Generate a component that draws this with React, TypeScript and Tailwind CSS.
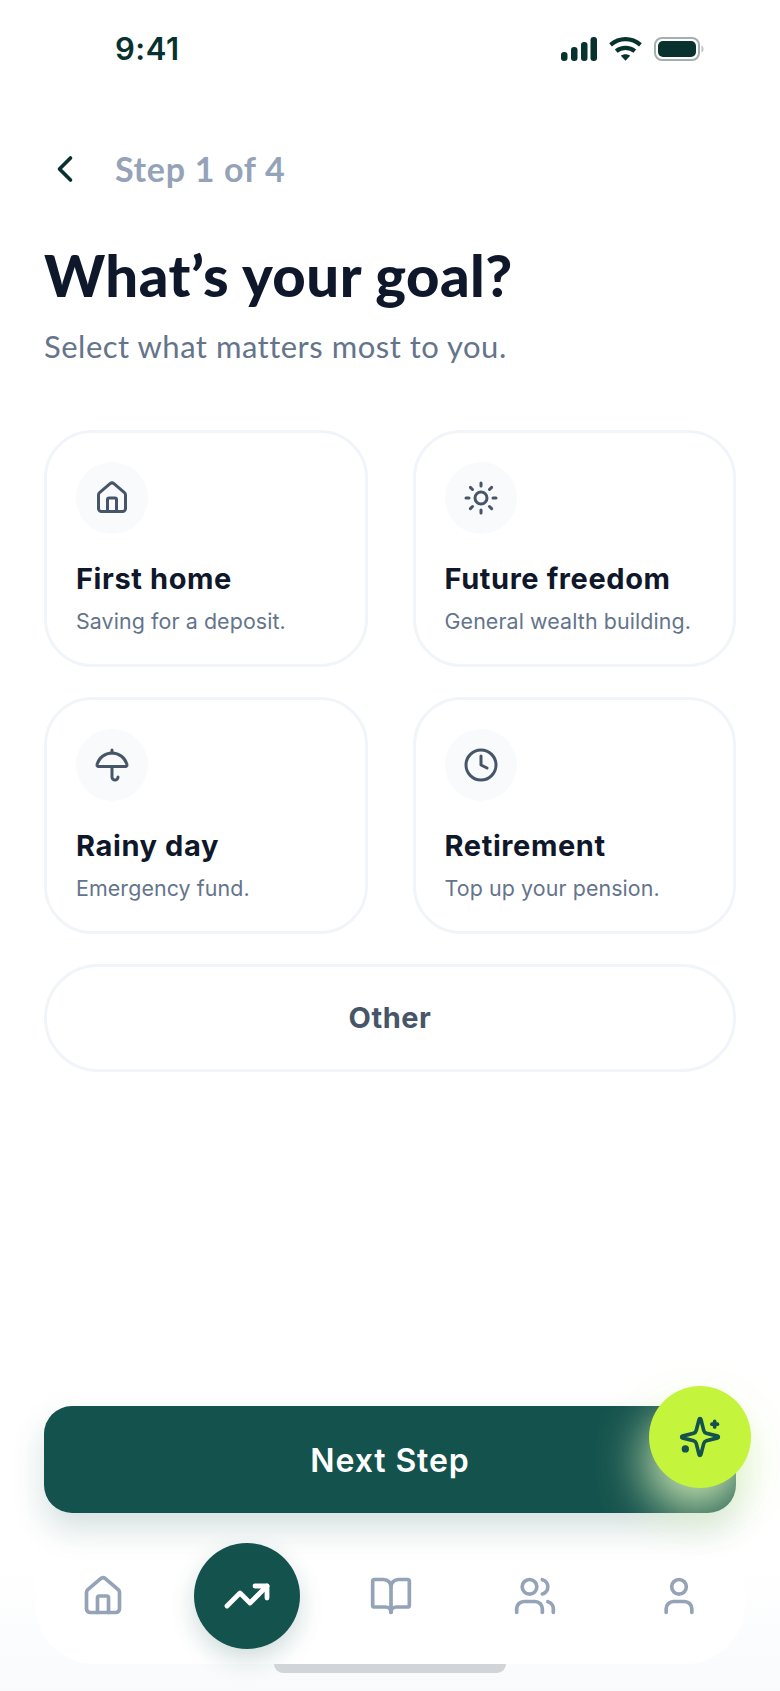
import { BookOpen, ChevronLeft, Clock, House, Sun, TrendingUp, Umbrella, User, Users } from "lucide-react";
import type { ReactNode } from "react";

function Card({ icon, title, sub }: { icon: ReactNode; title: string; sub: string }) {
  return (
    <div className="h-[237px] rounded-[48px] border-[3px] border-[#f1f5f9] bg-white pl-[29px] pt-[29px] font-['Inter',sans-serif]">
      <div className="flex h-[72px] w-[72px] items-center justify-center rounded-full bg-[#f8fafc] text-[#475569]">{icon}</div>
      <div className="mt-[27px] text-[29px] font-bold leading-[36px] tracking-[0.6px] text-[#0f172a]">{title}</div>
      <div className="mt-[8px] text-[21.4px] leading-[32px] tracking-[0.1px] text-[#64748b]">{sub}</div>
    </div>
  );
}

function NavSlot({ children }: { children: ReactNode }) {
  return <div className="flex w-[106px] items-center justify-center">{children}</div>;
}

export default function App() {
  return (
    <div className="relative flex h-[1691px] w-[780px] flex-col overflow-hidden bg-white">
      <div className="flex h-[97px] items-center justify-between pl-[115px] pr-[76px]">
        <span className="font-['Inter',sans-serif] text-[31px] font-semibold leading-none tracking-[0.5px] text-[#07322e]">9:41</span>
        <div className="flex items-center gap-[12px]">
          <svg width="36" height="24" viewBox="0 0 36 24" fill="#07322e">
            <rect x="0" y="15" width="6.500" height="9" rx="3" />
            <rect x="10" y="10" width="6.500" height="14" rx="3" />
            <rect x="20" y="5" width="6.500" height="19" rx="3" />
            <rect x="29.500" y="0" width="6.500" height="24" rx="3" />
          </svg>
          <svg width="33" height="26" viewBox="0 0 32 24" fill="none" stroke="#07322e" strokeWidth="4">
            <path d="M1.500 8C10 0.500 22 0.500 30.500 8" />
            <path d="M7 14C12 9.800 20 9.800 25 14" />
            <path d="M16 23.500L11.500 18.500C14 16.500 18 16.500 20.500 18.500Z" fill="#07322e" stroke="none" />
          </svg>
          <svg width="50" height="24" viewBox="0 0 50 24" fill="none">
            <rect x="1" y="1" width="44" height="22" rx="7" stroke="#a3b0ad" strokeWidth="2" />
            <rect x="4" y="4" width="38" height="16" rx="5" fill="#07322e" />
            <path d="M47.500 8.500C49 9 49.500 10.500 49.500 12C49.500 13.500 49 15 47.500 15.500Z" fill="#b9c4c1" />
          </svg>
        </div>
      </div>

      <div className="mt-[50px] flex h-[44px] items-center pl-[43px]">
        <ChevronLeft size={44} strokeWidth={2} className="text-[#07322e]" />
        <span className="ml-[28px] font-['Lato',sans-serif] text-[34px] font-bold leading-none tracking-[0.7px] text-[#94a3b8]">Step 1 of 4</span>
      </div>

      <h1 className="ml-[44px] mt-[52px] font-['Lato',sans-serif] text-[58px] font-black leading-[64px] tracking-[0.5px] text-[#0f172a]">What’s your goal?</h1>
      <p className="ml-[44px] mt-[19px] font-['Lato',sans-serif] text-[31px] leading-[40px] tracking-[0.5px] text-[#64748b]">Select what matters most to you.</p>

      <div className="mx-[44px] mt-[64px] grid grid-cols-2 gap-x-[45px] gap-y-[30px]">
        <Card icon={<House size={36} />} title="First home" sub="Saving for a deposit." />
        <Card icon={<Sun size={36} />} title="Future freedom" sub="General wealth building." />
        <Card icon={<Umbrella size={36} />} title="Rainy day" sub="Emergency fund." />
        <Card icon={<Clock size={36} />} title="Retirement" sub="Top up your pension." />
        <div className="col-span-2 flex h-[108px] items-center justify-center rounded-[54px] border-[3px] border-[#f1f5f9] bg-white font-['Inter',sans-serif] text-[29px] font-bold tracking-[0.55px] text-[#475569]">Other</div>
      </div>

      <div className="flex flex-1 flex-col justify-end bg-gradient-to-b from-white from-80% to-[#f8fafc]">
        <div className="relative mx-[44px] mb-[15px] flex h-[107px] items-center justify-center rounded-[28px] bg-[#14524d] pt-[3px] font-['Inter',sans-serif] text-[32px] font-semibold tracking-[0.9px] text-white shadow-[0_16px_32px_rgba(20,82,77,0.18)]">
          Next Step
          <div className="absolute right-[-15px] top-[-20px] flex h-[102px] w-[102px] items-center justify-center rounded-full bg-[#c4f53c] text-[#14524d] shadow-[-4px_24px_50px_rgba(225,250,190,0.9)]">
            <svg width="44" height="44" viewBox="0 0 24 24" fill="none" stroke="currentColor" strokeWidth="2" strokeLinecap="round" strokeLinejoin="round">
              <path d="M9.937 15.500A2 2 0 0 0 8.500 14.063l-6.135-1.582a.5.5 0 0 1 0-.962L8.500 9.936A2 2 0 0 0 9.937 8.500l1.582-6.135a.5.5 0 0 1 .963 0L14.063 8.500A2 2 0 0 0 15.500 9.937l6.135 1.581a.5.5 0 0 1 0 .964L15.500 14.063a2 2 0 0 0-1.437 1.437l-1.582 6.135a.5.5 0 0 1-.963 0z" />
              <path d="M20 3.500v3" />
              <path d="M21.500 5h-3" />
              <circle cx="4" cy="18.500" r="1" fill="currentColor" />
            </svg>
          </div>
        </div>
        <div className="mx-[35px] flex h-[136px] items-center justify-between rounded-[60px] bg-white pl-[15px] pr-[13px] text-[#94a3b8]">
          <NavSlot><House size={44} /></NavSlot>
          <div className="flex h-[106px] w-[106px] items-center justify-center rounded-full bg-[#14524d] text-white shadow-[0_10px_24px_rgba(20,82,77,0.2)]">
            <TrendingUp size={48} strokeWidth={2.4} />
          </div>
          <NavSlot><BookOpen size={44} /></NavSlot>
          <NavSlot><Users size={44} /></NavSlot>
          <NavSlot><User size={44} /></NavSlot>
        </div>
        <div className="mx-auto mb-[18px] h-[9px] w-[232px] rounded-b-full bg-[#d1d5d8]" />
      </div>
    </div>
  );
}
